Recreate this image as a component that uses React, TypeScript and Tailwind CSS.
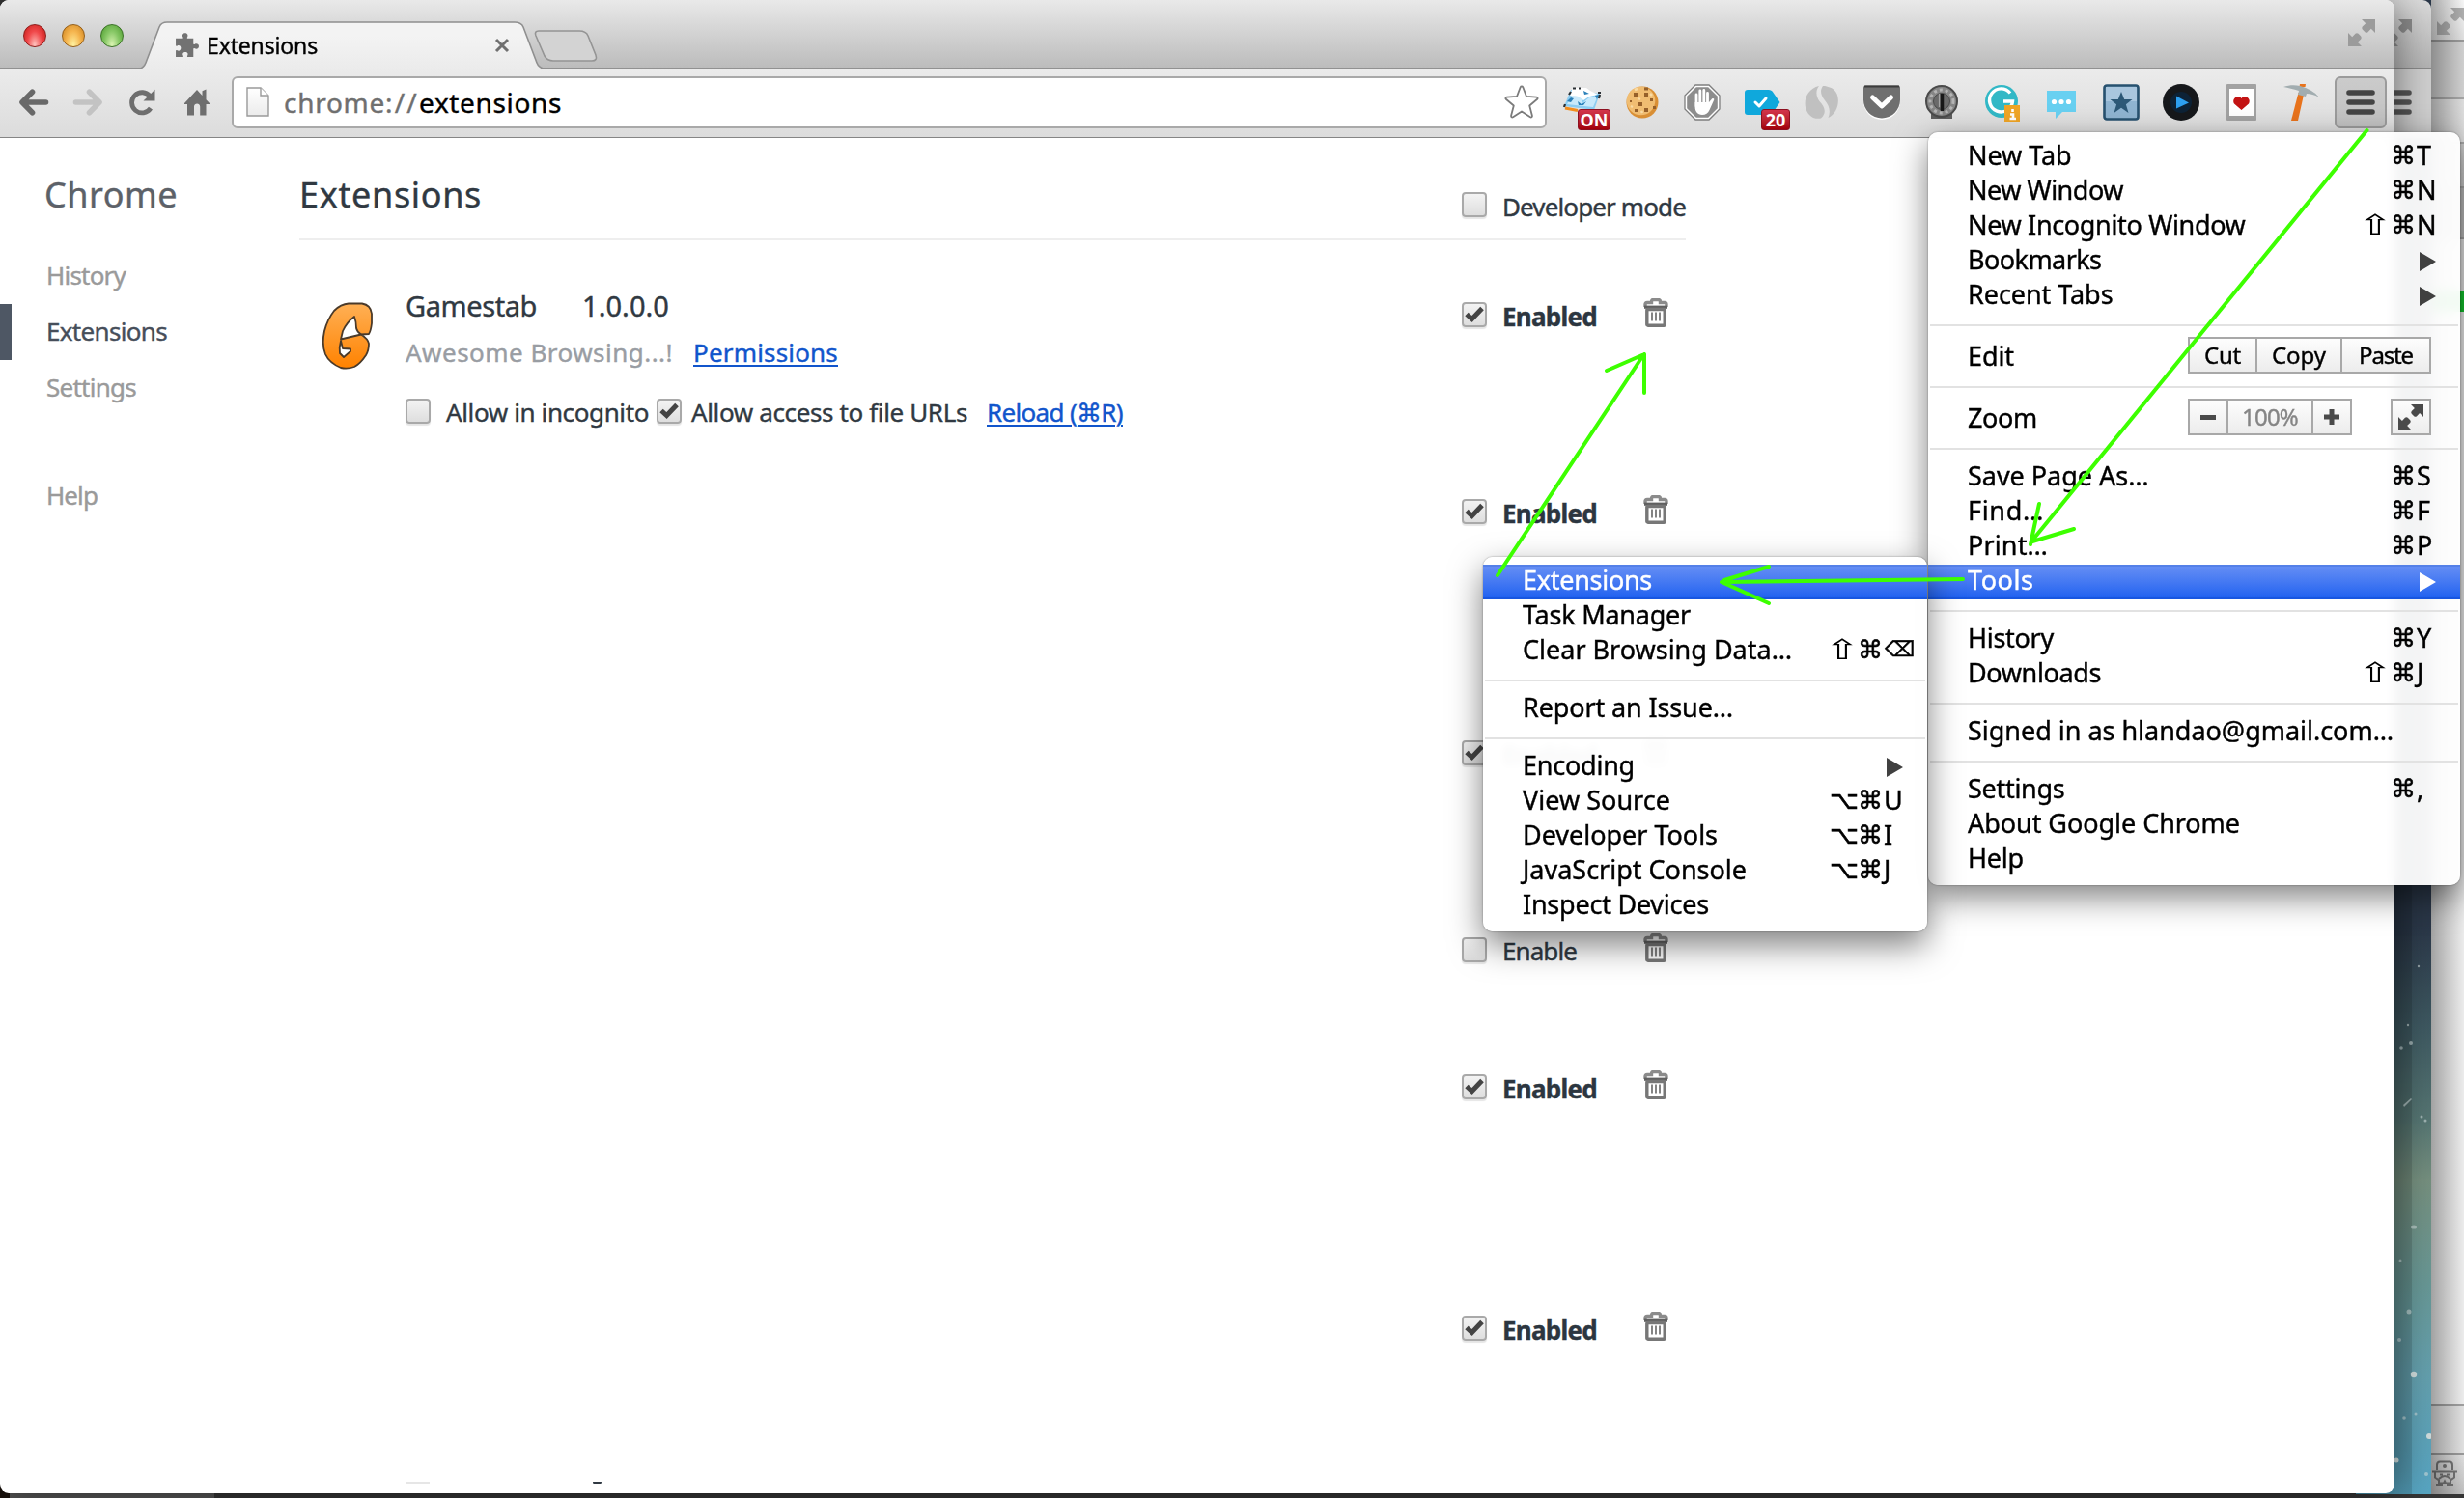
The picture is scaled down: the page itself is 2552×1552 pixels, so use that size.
import React, { useLayoutEffect, useRef } from "react";

/** Text run whose tracking is adjusted so that its advance equals `w` pixels. */
function Fit({ w, className = "", children }: { w: number; className?: string; children: string }) {
  const ref = useRef<HTMLSpanElement>(null);
  useLayoutEffect(() => {
    const el = ref.current;
    if (!el) return;
    el.style.letterSpacing = "0px";
    const natural = el.getBoundingClientRect().width;
    el.style.letterSpacing = `${(w - natural) / children.length}px`;
  }, [w, children]);
  return (
    <span ref={ref} className={`inline-block whitespace-pre shrink-0 [-webkit-text-stroke:0.4px_currentColor] ${className}`}>
      {children}
    </span>
  );
}

/* ---------- toolbar icons ---------- */

const Puzzle = () => (
  <svg className="w-[25px] h-[25px]" viewBox="0 0 24 24" fill="#727272">
    <path d="M1 5.5h6.6c.9 0 .9-.8.4-1.500C7 2 8.300.2 10.300.2s3.300 1.800 2.300 3.800c-.5.700-.5 1.500.4 1.500h5.500v5.300c0 .9.900.9 1.500.4 2-1 4 .2 4 2.200s-2 3.300-4 2.300c-.6-.5-1.500-.5-1.500.4V24h-5.300c-.900 0-1-.8-.5-1.500 1-2-.3-3.300-2.200-3.300s-3.200 1.300-2.200 3.300c.500.700.4 1.500-.5 1.500H1v-6c0-.9.800-.9 1.500-.4 2 1 3.600-.4 3.600-2.400s-1.600-3.300-3.600-2.300c-.700.5-1.500.4-1.500-.4z" />
  </svg>
);

const Arrow = ({ flip, color }: { flip?: boolean; color: string }) => (
  <svg className={flip ? "w-[32px] h-[28px] -scale-x-100" : "w-[32px] h-[28px]"} viewBox="0 0 32 28" fill="none" stroke={color} strokeWidth="5.600" strokeLinecap="round" strokeLinejoin="round">
    <path d="M14.500 3.200 4 14l10.500 10.800M5 14h23.500" />
  </svg>
);

const Reload = () => (
  <svg className="w-[28px] h-[28px]" viewBox="0 0 28 28">
    <path d="M22.500 7.800A10.600 10.600 0 1 0 23 20.200" fill="none" stroke="#6e6e6e" strokeWidth="4.800" />
    <path d="M27.500.8V12.500H15.500z" fill="#6e6e6e" />
  </svg>
);

const Home = () => (
  <svg className="w-[26px] h-[28px]" viewBox="0 0 26 28" fill="#6e6e6e">
    <path d="M13 1 18.500 7V2.200L22.500 0.500V11.300L26 15v1h-3.500V27.500H16.200V18.500c0-4-6.200-4-6.200 0v9H3V16H0v-1z" />
  </svg>
);

const PageIcon = () => (
  <svg className="w-[24px] h-[32px]" viewBox="0 0 24 32">
    <defs>
      <linearGradient id="pg" x1="0" y1="0" x2="0" y2="1">
        <stop offset="0" stopColor="#fff" />
        <stop offset="1" stopColor="#ebebeb" />
      </linearGradient>
    </defs>
    <path d="M1 1h14l8 8v21H1z" fill="url(#pg)" stroke="#9a9a9a" strokeWidth="1.400" />
    <path d="M15 1v8h8" fill="#fff" stroke="#9a9a9a" strokeWidth="1.400" />
  </svg>
);

const StarOutline = () => (
  <svg className="w-[36px] h-[36px]" viewBox="0 0 36 36" fill="none" stroke="#7b7b7b" strokeWidth="1.800" strokeLinejoin="round">
    <path d="M16.700 2.300c.5-1.200 2.100-1.200 2.600 0l3.600 9.500 10.500.8c1.200.1 1.600 1.400.8 2.200l-8 6.700 2.700 10.300c.3 1.400-.9 2.200-2 1.500L18 27.500l-8.900 5.800c-1.100.7-2.300-.1-2-1.500l2.700-10.300-8-6.700c-.8-.8-.4-2.100.8-2.200l10.500-.8z" />
  </svg>
);

const Fullscreen = ({ className, color }: { className: string; color: string }) => (
  <svg className={className} viewBox="0 0 28 28" fill={color}>
    <path d="M14 0H28V14L23.800 9.800 20.500 13.200q-1.500 1.200-3 0l-2.700-2.700q-1.200-1.500 0-3L18.200 4.200z" />
    <path d="M0 14V28H14L9.800 23.800 13.200 20.500q1.200-1.500 0-3L10.500 14.800q-1.500-1.200-3 0L4.200 18.200z" />
  </svg>
);

const Bars = ({ className = "", color = "#444" }: { className?: string; color?: string }) => (
  <svg className={`w-[30px] h-[26px] shrink-0 ${className}`} viewBox="0 0 30 26" stroke={color} strokeWidth="5.600" strokeLinecap="round">
    <path d="M3 3h24M3 13h24M3 23h24" />
  </svg>
);

const Notes = () => (
  <svg className="w-[40px] h-[26px]" viewBox="0 0 40 26">
    <path d="M8 3 38 7 32 24 1 20z" fill="#8ccdf2" />
    <path d="M4 18 9 9 19 11 20 17 27 11 36 9 31 21z" fill="#c8e9fb" />
    <path d="M10 1h14l4 3 8 4-9 2-6 4-5-4-9-1z" fill="#fff" />
    <path d="M15 15l4 3 5-3-3 4-5 0zM4 15l4-4 3 1-3 4zM21 4l6 3-5 1zM33 9l4-1-2 5z" fill="#2a80b9" />
    <path d="M2 22l13 2.500" stroke="#f28c1c" strokeWidth="3" />
    <path d="M1 21l1-3M10 1.500h3M16 1.500h2M6 8l2-3M36 6h3M37 12l1-4" stroke="#2a2f33" strokeWidth="2.200" />
  </svg>
);

const Cookie = () => (
  <svg className="w-[36px] h-[36px]" viewBox="0 0 36 36">
    <circle cx="18" cy="18" r="16.500" fill="#d98f35" />
    <circle cx="16.500" cy="16.500" r="14.800" fill="#f0bd72" />
    <g fill="#96602a">
      <path d="M20 2.500h4v3h-4zM9 8h4v4H9zM20 8h4v4h-4zM14 18h4v4h-4zM26 14h3v3h-3zM10 25h3v3h-3zM20 24h4v4h-4zM29 22h3v3h-3zM5 16h2v2H5z" />
    </g>
    <path d="M10 5l3-1M14 14l2 1M6 22l2 1M26 9l2 2M17 27l1 2" stroke="#f9dba5" strokeWidth="2.500" />
  </svg>
);

const StopHand = () => (
  <svg className="w-[38px] h-[38px]" viewBox="0 0 38 38">
    <path d="M12 1h14l11 11v14L26 37H12L1 26V12z" fill="#fff" stroke="#7e7e7e" strokeWidth="1.300" />
    <path d="M12.800 3.200h12.400l9.600 9.600v12.400l-9.600 9.600H12.800l-9.600-9.600V12.800z" fill="#8d8d8d" />
    <path d="M13 11v12M16.800 7v14M20.800 6.500v14M24.500 9.500v13" stroke="#fff" strokeWidth="2.800" strokeLinecap="round" />
    <path d="M11.600 19h14.400l3-3.500c1.500-1 3 0 2 1.500L26.500 27c-1.500 3.500-4 5-7.500 5-5 0-7.400-4-7.400-8z" fill="#fff" />
  </svg>
);

const Tag = () => (
  <svg className="w-[37px] h-[26px]" viewBox="0 0 37 26">
    <path d="M3 0h22q2 0 3.500 1.500L36.500 13 28.500 24.500Q27 26 25 26H3q-3 0-3-3V3q0-3 3-3z" fill="#0fa8dc" />
    <path d="M11 13l4 4 7-8" fill="none" stroke="#fff" strokeWidth="3" strokeLinecap="round" strokeLinejoin="round" />
  </svg>
);

const Swirl = () => (
  <svg className="w-[36px] h-[36px]" viewBox="0 0 36 36" fill="#c0c0c0">
    <path d="M15 1C-2 5-4 27 9 34c3 1 6 1 8 .500C24 28 20 22 15.500 17 12 12 11 6 15 1z" />
    <path d="M19 1C15.500 6 17 11 21 16c5 6 6 12 3.500 18C37 29 39 6 26 2.500c-2-.8-4-1.500-7-1.500z" />
  </svg>
);

const Pocket = () => (
  <svg className="w-[40px] h-[36px]" viewBox="0 0 40 36">
    <path d="M1 3h38v14a19 19 0 0 1-38 0z" fill="#fff" />
    <path d="M1 3q0-2.500 2.500-2.500h33Q39 .5 39 3v12.500a19 19 0 0 1-38 0z" fill="#6f6f6f" />
    <path d="M2 1.500h36" stroke="#3c3c3c" strokeWidth="2" />
    <path d="M10.500 13 20 22 29.500 13" fill="none" stroke="#fff" strokeWidth="5" strokeLinecap="round" strokeLinejoin="round" />
  </svg>
);

const Dial = () => (
  <svg className="w-[36px] h-[38px]" viewBox="0 0 36 38">
    <path d="M7 28h22v8H7z" fill="#5e5e5e" />
    <circle cx="18" cy="18" r="16" fill="#868686" stroke="#4a4a4a" strokeWidth="2" />
    <circle cx="18" cy="18" r="12" fill="none" stroke="#b4b4b4" strokeWidth="3" strokeDasharray="3 3" />
    <circle cx="18" cy="18" r="8.500" fill="#6a6a6a" stroke="#4a4a4a" />
    <path d="M18.500 10v18" stroke="#181818" strokeWidth="3.500" />
    <path d="M15.500 10v14" stroke="#a5a5a5" strokeWidth="1.200" />
  </svg>
);

const GMark = () => (
  <svg className="w-[37px] h-[39px]" viewBox="0 0 37 39">
    <circle cx="17" cy="18" r="17" fill="#32b8c6" />
    <path d="M26 9.500A12 12 0 1 0 28.500 18H19" fill="none" stroke="#fff" strokeWidth="3.400" />
    <path d="M20 22h16v17H20z" fill="#f0a526" />
    <path d="M28.500 26v3M26 31.500h3V36M25.500 36h6.500" fill="none" stroke="#fff" strokeWidth="2.600" />
  </svg>
);

const Chat = () => (
  <svg className="w-[30px] h-[29px]" viewBox="0 0 30 29">
    <path d="M0 0h30v22H16l-7 7v-7H0z" fill="#68d0f1" />
    <g fill="#fff">
      <circle cx="7.500" cy="11.500" r="2.600" />
      <circle cx="15" cy="11.500" r="2.600" />
      <circle cx="22.500" cy="11.500" r="2.600" />
    </g>
  </svg>
);

const StarBox = () => (
  <svg className="w-[38px] h-[38px]" viewBox="0 0 38 38">
    <rect x="1.500" y="1.500" width="35" height="35" rx="2.500" fill="#8fb4d1" stroke="#27516f" strokeWidth="2.600" />
    <path d="M3 3h32v15H3z" fill="#a9c6de" />
    <path d="M19 8l3.200 8h8.300l-6.600 5.200 2.600 8.800-7.500-5.200-7.500 5.200 2.600-8.800L7.500 16h8.300z" fill="#2c5877" />
  </svg>
);

const PlayDisc = () => (
  <svg className="w-[38px] h-[38px]" viewBox="0 0 38 38">
    <circle cx="19" cy="19" r="19" fill="#16181b" />
    <circle cx="19" cy="19" r="11" fill="#0d2236" />
    <path d="M14 12.500 27 19.500 14 25.500z" fill="#2d9ff0" />
  </svg>
);

const HeartCard = () => (
  <svg className="w-[31px] h-[38px]" viewBox="0 0 31 38">
    <rect width="31" height="38" rx="1" fill="#a2a2a2" />
    <rect x="3" y="5" width="25" height="28" fill="#fff" />
    <path d="M15.500 27 8 20.500c-3-4.500 3.500-10.500 7.500-5.500 4-5 10.500 1 7.500 5.500z" fill="#c31414" />
  </svg>
);

const Pick = () => (
  <svg className="w-[37px] h-[38px]" viewBox="0 0 37 38">
    <path d="M15.500 9h6L15 38H8z" fill="#e8731c" />
    <path d="M17 0h6l-.5 3h-6z" fill="#e8731c" />
    <path d="M0 3C8 0 17 1 23 4c7 3 11 6 14 10-5-3-9-4-13-4l-1 3-8-2 1-4C10 5 5 4 0 3z" fill="#a2adb0" />
  </svg>
);

const Badge = ({ children, className }: { children: string; className: string }) => (
  <div className={`absolute h-[22px] rounded-[3px] border border-[#8d1020] bg-gradient-to-b from-[#d3354b] to-[#a30009] text-center font-bold text-white text-[18px] leading-[20px] ${className}`}>
    {children}
  </div>
);

const Slot = ({ children }: { children: React.ReactNode }) => (
  <div className="relative w-[62px] h-[54px] shrink-0 flex items-center justify-center">{children}</div>
);

/* ---------- page pieces ---------- */

const Check = ({ on }: { on?: boolean }) => (
  <span className="w-[26px] h-[26px] shrink-0 rounded-[4px] border-2 border-[#a9a9a9] bg-gradient-to-b from-[#f3f3f3] to-[#dedede] shadow-[0_2px_1px_rgba(0,0,0,0.1)] flex items-center justify-center">
    {on && (
      <svg className="w-[20px] h-[20px]" viewBox="0 0 20 20" fill="none" stroke="#444" strokeWidth="5">
        <path d="M2 9.500 7.500 14.500 18 3.500" />
      </svg>
    )}
  </span>
);

const Trash = () => (
  <svg className="w-[26px] h-[30px] shrink-0" viewBox="0 0 26 30">
    <path d="M2 9V6.500Q2 4.500 4 4.500H8.500V3.500Q8.500 1.500 10.500 1.500H15.500Q17.500 1.500 17.500 3.500V4.500H22Q24 4.500 24 6.500V9" fill="none" stroke="#8b8b8b" strokeWidth="3.400" />
    <path d="M1 9.200h24" stroke="#606060" strokeWidth="3.200" />
    <rect x="3.800" y="11.500" width="18.400" height="16.700" rx="1" fill="#fff" stroke="#777" strokeWidth="3.400" />
    <path d="M9 14.500v9M13 14.500v9M17 14.500v9" stroke="#777" strokeWidth="1.800" />
  </svg>
);

function Controls({ on = true }: { on?: boolean }) {
  return (
    <div className="flex w-[232px] h-[30px] shrink-0">
      <div className="pt-[2px] flex">
        <Check on={on} />
      </div>
      <Fit w={on ? 98 : 77} className={on ? "ml-[16px] -mt-[2px] text-[26px] leading-[38px] font-bold text-[#2c3640]" : "ml-[16px] -mt-[2px] text-[26px] leading-[37px] text-[#303942]"}>
        {on ? "Enabled" : "Enable"}
      </Fit>
      <div className={on ? "ml-[48px] -mt-[2px]" : "ml-[69px] -mt-[2px]"}>
        <Trash />
      </div>
    </div>
  );
}

const GamestabLogo = () => (
  <svg className="w-[54px] h-[70px]" viewBox="0 0 54 70" stroke="#4a3a2a" strokeWidth="1.800" strokeLinejoin="round">
    <defs>
      <linearGradient id="gl" x1="0" y1="0" x2="0" y2="1">
        <stop offset="0" stopColor="#ffb055" />
        <stop offset="1" stopColor="#ff8200" />
      </linearGradient>
    </defs>
    <path
      d="M28 1.500H42Q51 3 52 12L52 22Q51 30 49 33L41 33.500Q48 38 49 43 49 50 46 55 40 64 34 67 27 69.500 20 68 8 63 4 54 0 44 3 30 6 18 13 9 20 2 28 1.500z"
      fill="url(#gl)"
    />
    <path d="M34 15Q26 21 22 30L20 38.500 41 33.500Q37 31 36 27 36 20 34 15z" fill="#fff" />
    <path d="M20 40Q18 47 19 53L23 57 30 51V48.500L22 48z" fill="#fff" />
  </svg>
);

/* ---------- menus ---------- */

const Mod = ({ children }: { children: string }) => (
  <span
    className={
      children === "⇧"
        ? "w-[28px] shrink-0 text-center text-[29px] font-['DejaVu_Sans'] scale-x-[1.500] -translate-x-[1px]"
        : "w-[28px] shrink-0 text-center text-[26px] font-['DejaVu_Sans'] [-webkit-text-stroke:0.600px_#000]"
    }
  >
    {children}
  </span>
);

type Item = { label: string; w: number; mods?: string[]; k?: string; sub?: boolean; hot?: boolean };

function Row({ label, w, mods, k, sub, hot }: Item) {
  return (
    <div
      className={
        hot
          ? "h-[36px] pl-[41px] flex items-start text-white bg-gradient-to-b from-[#648df4] to-[#2062f0] border-y-2 border-t-[#5480e8] border-b-[#1856e0]"
          : "h-[36px] pl-[41px] flex items-start text-black pt-[1px]"
      }
    >
      <Fit w={w + 3} className={hot ? "text-[27px] leading-[28px]" : "text-[27px] leading-[30px]"}>
        {label}
      </Fit>
      <div className="flex-1" />
      {mods && (
        <div className="flex h-[35px] leading-[30px] text-[27px]">
          {mods.map((m) => (
            <Mod key={m}>{m}</Mod>
          ))}
          <span className={k === "⌫" ? "w-[45px] pl-[1px] text-[22px] font-['DejaVu_Sans'] [-webkit-text-stroke:0.500px_#000]" : "w-[45px] [-webkit-text-stroke:0.400px_#000]"}>{k}</span>
        </div>
      )}
      {sub && (
        <svg className={hot ? "w-[17px] h-[20px] mr-[25px] mt-[6px]" : "w-[17px] h-[20px] mr-[25px] mt-[7px]"} viewBox="0 0 17 20" fill={hot ? "#fff" : "#404040"}>
          <path d="M0 0 17 10 0 20z" />
        </svg>
      )}
    </div>
  );
}

const Sep = () => <div className="h-[24px] py-[11px] px-[2px]"><div className="h-[2px] bg-[#e2e2e2]" /></div>;

const cell = "h-[34px] flex items-center justify-center bg-gradient-to-b from-[#fdfdfd] to-[#ececec]";

function MainMenu() {
  return (
    <div className="absolute left-[1997px] top-[137px] w-[551px] h-[780px] py-[8px] rounded-[10px] bg-white/95 backdrop-blur-[6px] shadow-[0_12px_34px_rgba(0,0,0,0.5),0_0_2px_rgba(0,0,0,0.45)]">
      <Row label="New Tab" w={104.500} mods={["⌘"]} k="T" />
      <Row label="New Window" w={158} mods={["⌘"]} k="N" />
      <Row label="New Incognito Window" w={284.500} mods={["⇧", "⌘"]} k="N" />
      <Row label="Bookmarks" w={135.500} sub />
      <Row label="Recent Tabs" w={147.500} sub />
      <Sep />
      <div className="h-[40px] pl-[41px] flex items-start text-[27px]">
        <Fit w={48} className="leading-[39px]">Edit</Fit>
        <div className="ml-auto mr-[30px] h-[38px] flex gap-[2px] p-[2px] bg-[#a8a8a8] text-[24px]">
          <div className={`${cell} w-[68px]`}><Fit w={38} className="leading-[34px]">Cut</Fit></div>
          <div className={`${cell} w-[86px]`}><Fit w={56} className="leading-[34px]">Copy</Fit></div>
          <div className={`${cell} w-[90px]`}><Fit w={56} className="leading-[34px]">Paste</Fit></div>
        </div>
      </div>
      <Sep />
      <div className="h-[40px] pl-[41px] flex items-start text-[27px]">
        <Fit w={72} className="leading-[40px]">Zoom</Fit>
        <div className="ml-auto h-[38px] flex gap-[2px] p-[2px] bg-[#a8a8a8] text-[24px]">
          <div className={`${cell} w-[38px]`}><div className="w-[16px] h-[5px] bg-[#4a4a4a]" /></div>
          <div className={`${cell} w-[86px] text-[#858585]`}><Fit w={58} className="leading-[34px]">100%</Fit></div>
          <div className={`${cell} w-[38px]`}>
            <svg className="w-[16px] h-[16px]" viewBox="0 0 16 16" fill="#4a4a4a"><path d="M5.500 0h5v5.500H16v5h-5.500V16h-5v-5.500H0v-5h5.500z" /></svg>
          </div>
        </div>
        <div className="ml-[40px] mr-[30px] h-[38px] w-[42px] p-[2px] bg-[#a8a8a8]">
          <div className={`${cell} w-[38px]`}><Fullscreen className="w-[28px] h-[26px]" color="#4a4a4a" /></div>
        </div>
      </div>
      <Sep />
      <Row label="Save Page As…" w={184.500} mods={["⌘"]} k="S" />
      <Row label="Find…" w={76} mods={["⌘"]} k="F" />
      <Row label="Print…" w={80} mods={["⌘"]} k="P" />
      <Row label="Tools" w={65.500} sub hot />
      <Sep />
      <Row label="History" w={86} mods={["⌘"]} k="Y" />
      <Row label="Downloads" w={135} mods={["⇧", "⌘"]} k="J" />
      <Sep />
      <Row label="Signed in as hlandao@gmail.com…" w={438} />
      <Sep />
      <Row label="Settings" w={97.500} mods={["⌘"]} k="," />
      <Row label="About Google Chrome" w={279} />
      <Row label="Help" w={55} />
    </div>
  );
}

function ToolsMenu() {
  return (
    <div className="absolute left-[1536px] top-[577px] w-[460px] h-[388px] py-[8px] rounded-[10px] bg-white/97 backdrop-blur-[4px] shadow-[0_14px_34px_rgba(0,0,0,0.5),0_0_2px_rgba(0,0,0,0.45)]">
      <Row label="Extensions" w={131} hot />
      <Row label="Task Manager" w={171} />
      <Row label="Clear Browsing Data…" w={276} mods={["⇧", "⌘"]} k="⌫" />
      <Sep />
      <Row label="Report an Issue…" w={215} />
      <Sep />
      <Row label="Encoding" w={113} sub />
      <Row label="View Source" w={150} mods={["⌥", "⌘"]} k="U" />
      <Row label="Developer Tools" w={199} mods={["⌥", "⌘"]} k="I" />
      <Row label="JavaScript Console" w={229} mods={["⌥", "⌘"]} k="J" />
      <Row label="Inspect Devices" w={190} />
    </div>
  );
}

/* ---------- main window ---------- */

function TabStrip() {
  return (
    <div className="relative h-[72px] shrink-0 flex bg-gradient-to-b from-[#e9e9e9] to-[#bcbcbc] border-b-2 border-[#919191]">
      <div className="flex gap-[16px] pt-[25px] pl-[24px] w-[145px] shrink-0">
        <span className="w-[24px] h-[24px] rounded-full border border-[#8f1f1c] bg-[radial-gradient(ellipse_at_50%_95%,#ffc4bf_0%,#f0484a_50%,#d9302f_75%,#a3201e_100%)]" />
        <span className="w-[24px] h-[24px] rounded-full border border-[#96601a] bg-[radial-gradient(ellipse_at_50%_95%,#fff2a0_0%,#f5b44e_50%,#e09a35_75%,#a86a1c_100%)]" />
        <span className="w-[24px] h-[24px] rounded-full border border-[#3c7428] bg-[radial-gradient(ellipse_at_50%_95%,#dcf5b4_0%,#86c765_50%,#68b048_75%,#3f7c29_100%)]" />
      </div>
      <div className="relative w-[418px] h-[72px] shrink-0 z-10">
        <svg className="absolute left-0 top-0 w-[418px] h-[72px]" viewBox="0 0 418 72">
          <defs>
            <linearGradient id="tab" x1="0" y1="0" x2="0" y2="1">
              <stop offset="0.300" stopColor="#f3f3f3" />
              <stop offset="1" stopColor="#ebebeb" />
            </linearGradient>
          </defs>
          <path d="M0 72V71Q4 70 6 65L20 28Q22 23 28 23H388Q395 23 397 28L411 65Q413 70 418 71V72z" fill="url(#tab)" />
          <path d="M0 71Q4 70 6 65L20 28Q22 23 28 23H388Q395 23 397 28L411 65Q413 70 418 71" fill="none" stroke="#8f8f8f" strokeWidth="1.600" />
        </svg>
        <div className="relative flex pt-[34px] pl-[36px]">
          <Puzzle />
          <Fit w={115} className="ml-[8px] -mt-[4px] text-[23px] leading-[34px] text-black">Extensions</Fit>
          <svg className="w-[16px] h-[16px] mt-[5px] ml-[183px]" viewBox="0 0 16 16" stroke="#707070" strokeWidth="3"><path d="M2 2l12 12M14 2 2 14" /></svg>
        </div>
      </div>
      <svg className="w-[68px] h-[36px] mt-[29px] -ml-[11px]" viewBox="0 0 68 36">
        <path d="M6 3H48Q55 3 57 8L65 28Q67 34 61 34H21Q15 34 12 29L3 8Q1 3 6 3z" fill="#d3d3d3" stroke="#949494" strokeWidth="1.600" />
      </svg>
      <Fullscreen className="ml-auto mr-[20px] mt-[20px] w-[28px] h-[28px]" color="#9b9b9b" />
    </div>
  );
}

function Toolbar() {
  return (
    <div className="h-[71px] shrink-0 flex pt-[7px] bg-gradient-to-b from-[#ebebeb] to-[#dcdcdc] border-b border-[#858585]">
      <div className="w-[240px] h-[54px] pl-[19px] flex items-center shrink-0">
        <Arrow color="#696969" />
        <div className="ml-[24px] flex"><Arrow flip color="#c3c3c3" /></div>
        <div className="ml-[26px] flex"><Reload /></div>
        <div className="ml-[30px] flex"><Home /></div>
      </div>
      <div className="w-[1362px] h-[54px] shrink-0 flex items-center rounded-[6px] border-2 border-[#a9a9a9] bg-white pl-[13px] pr-[6px]">
        <PageIcon />
        <div className="ml-[15px] w-[140px] shrink-0 flex text-[28px] leading-[50px] text-[#6f6f6f]">
          <Fit w={105}>chrome</Fit>
          <Fit w={35}>{"://"}</Fit>
        </div>
        <Fit w={148} className="text-[28px] leading-[50px] text-black">extensions</Fit>
        <div className="ml-auto flex"><StarOutline /></div>
      </div>
      <div className="ml-[6px] flex">
        <Slot>
          <div className="-mt-[6px]"><Notes /></div>
          <Badge className="left-[26px] top-[34px] w-[34px]">ON</Badge>
        </Slot>
        <Slot><Cookie /></Slot>
        <Slot><StopHand /></Slot>
        <Slot>
          <Tag />
          <Badge className="left-[30px] top-[34px] w-[30px]">20</Badge>
        </Slot>
        <Slot><Swirl /></Slot>
        <Slot><Pocket /></Slot>
        <Slot><Dial /></Slot>
        <Slot><div className="pl-[2px]"><GMark /></div></Slot>
        <Slot><div className="pt-[4px]"><Chat /></div></Slot>
        <Slot><StarBox /></Slot>
        <Slot><PlayDisc /></Slot>
        <Slot><HeartCard /></Slot>
        <Slot><Pick /></Slot>
      </div>
      <div className="ml-[4px] w-[54px] h-[54px] shrink-0 rounded-[6px] border-2 border-[#9b9b9b] bg-gradient-to-b from-[#cbcbcb] to-[#c1c1c1] flex items-center justify-center">
        <Bars />
      </div>
    </div>
  );
}

function Sidebar() {
  return (
    <div className="w-[310px] shrink-0 pt-[33px] text-[26px] leading-[57px] text-[#9a9a9a]">
      <div className="pl-[46px] h-[50px] text-[36px] leading-[51px] text-[#5c6168]"><Fit w={138}>Chrome</Fit></div>
      <div className="mt-[31px] h-[58px] pl-[48px]"><Fit w={82}>History</Fit></div>
      <div className="h-[58px] pl-[36px] border-l-[12px] border-[#4e5764] text-[#464e5a]"><Fit w={125}>Extensions</Fit></div>
      <div className="h-[58px] pl-[48px]"><Fit w={93}>Settings</Fit></div>
      <div className="mt-[54px] h-[58px] pl-[48px]"><Fit w={53}>Help</Fit></div>
    </div>
  );
}

function ExtensionsPage() {
  return (
    <div className="w-[1436px] shrink-0 flex flex-col text-[#303942] text-[26px]">
      <div className="h-[106px] flex border-b-2 border-[#eeeeee] pt-[33px]">
        <Fit w={189} className="text-[36px] leading-[52px]">Extensions</Fit>
        <div className="ml-auto flex pt-[23px]">
          <Check />
          <Fit w={190} className="ml-[16px] -mt-[2px] leading-[34px]">Developer mode</Fit>
        </div>
      </div>
      <div className="h-[204px] flex">
        <div className="w-[110px] pt-[64px] pl-[23px] shrink-0"><GamestabLogo /></div>
        <div className="flex-1 pt-[47px]">
          <div className="h-[40px] flex text-[29px] leading-[41px]">
            <Fit w={136}>Gamestab</Fit>
            <Fit w={90} className="ml-[47px]">1.0.0.0</Fit>
          </div>
          <div className="mt-[9px] h-[40px] flex leading-[40px]">
            <Fit w={277} className="text-[#999da3]">Awesome Browsing...!</Fit>
            <Fit w={150} className="ml-[21px] text-[#1155cc] underline decoration-2 underline-offset-[3px]">Permissions</Fit>
          </div>
          <div className="mt-[22px] h-[40px] flex items-center leading-[40px]">
            <div className="flex -mt-[2px]"><Check /></div>
            <Fit w={210} className="ml-[16px]">Allow in incognito</Fit>
            <div className="ml-[8px] -mt-[2px] flex"><Check on /></div>
            <Fit w={286} className="ml-[10px]">Allow access to file URLs</Fit>
            <Fit w={141} className="ml-[20px] text-[#1155cc] underline decoration-2 underline-offset-[3px]">Reload (⌘R)</Fit>
          </div>
        </div>
        <div className="pt-[62px]"><Controls /></div>
      </div>
      <div className="h-[250px] flex justify-end pt-[62px]"><Controls /></div>
      <div className="h-[204px] flex justify-end pt-[62px]"><Controls /></div>
      <div className="h-[142px] flex justify-end pt-[62px]"><Controls on={false} /></div>
      <div className="h-[250px] flex justify-end pt-[62px]"><Controls /></div>
      <div className="h-[236px] flex justify-end pt-[62px]"><Controls /></div>
      <div className="flex pl-[111px] items-start">
        <div className="w-[24px] h-[2px] bg-[#e6e6e6]" />
        <div className="ml-[169px] w-[9px] h-[3px] rounded-b-full bg-[#303942]" />
      </div>
    </div>
  );
}

function BrowserWindow() {
  return (
    <div className="absolute left-0 top-0 w-[2480px] h-[1547px] flex flex-col rounded-[9px] overflow-hidden bg-white shadow-[0_0_44px_rgba(0,0,0,0.5)]">
      <TabStrip />
      <Toolbar />
      <div className="flex-1 flex">
        <Sidebar />
        <ExtensionsPage />
      </div>
    </div>
  );
}

/* ---------- desktop behind ---------- */

function Desktop() {
  return (
    <>
      <div className="absolute left-0 top-[1540px] w-[2552px] h-[12px] flex">
        <div className="w-[10px] bg-[#1a120c]" />
        <div className="w-[212px] bg-[#555555]" />
        <div className="flex-1 bg-[#353535]" />
      </div>
      <div className="absolute left-0 top-0 w-[2518px] h-[1548px] flex justify-end">
        <div className="w-[78px] bg-[linear-gradient(to_bottom,#2b3849_0%,#2b3849_62%,#3f5a62_69%,#567673_75%,#76907f_79%,#689896_86%,#64a0ae_92%,#57a5c2_100%)]">
          <div className="w-[58px] h-full bg-black/12" />
        </div>
      </div>
      <svg className="absolute left-[2480px] top-[930px] w-[38px] h-[616px]" viewBox="0 0 38 616" fill="#cfdcdc">
        <g opacity="0.6">
          <circle cx="17" cy="151" r="2" />
          <circle cx="7" cy="156" r="1.800" />
          <circle cx="28" cy="227" r="1.500" />
          <circle cx="32" cy="231" r="1.500" />
          <circle cx="25" cy="71" r="1.200" />
          <circle cx="14" cy="132" r="1.200" />
          <path d="M9 215l8-7 1 1-8 8z" />
          <ellipse cx="20" cy="341" rx="3" ry="1.500" />
          <circle cx="6" cy="376" r="1.500" />
          <circle cx="15" cy="429" r="2.500" />
          <circle cx="5" cy="458" r="2" />
          <circle cx="10" cy="539" r="1.800" />
          <circle cx="22" cy="535" r="1.500" />
          <circle cx="33" cy="597" r="2" />
        </g>
        <circle cx="20" cy="494" r="3.200" />
        <circle cx="36" cy="558" r="3" />
        <circle cx="2" cy="583" r="2.500" />
      </svg>
      <div className="absolute left-[2518px] top-0 w-[34px] h-[1548px] flex flex-col bg-[#ececec]">
        <div className="h-[43px] border-b-2 border-[#999] bg-gradient-to-b from-[#f6f6f6] to-[#dedede] pl-[6px] pt-[8px] flex">
          <Fullscreen className="w-[28px] h-[28px] shrink-0" color="#adadad" />
        </div>
        <div className="h-[60px] border-b-2 border-[#a5a5a5] bg-[#cfcfcf]" />
        <div className="h-[46px] border-b-2 border-[#a5a5a5] bg-[#dcdcdc]" />
        <div className="h-[46px] border-b-2 border-[#a5a5a5] bg-[#c9c9c9]" />
        <div className="h-[53px] border-b-2 border-[#a0a0a0] bg-[#b9b9b9]" />
        <div className="h-[53px] bg-[#e2e2e2]" />
        <div className="h-[22px] bg-[#12c22c]" />
        <div className="h-[1134px] border-b-2 border-[#a0a0a0] bg-[#ececec]" />
        <div className="h-[50px] border-b-2 border-[#9a9a9a] bg-[#e0e0e0]" />
        <div className="flex-1 bg-gradient-to-b from-[#dedede] to-[#bfbfbf] pt-[6px] pl-[1px]">
          <svg className="w-[26px] h-[28px]" viewBox="0 0 26 28" fill="none" stroke="#757575" strokeWidth="2">
            <path d="M5 10V5Q5 1.500 8 1.500H18Q21 1.500 21 5V10M0 11.500H26M3 11.500v6l4 3v3h5l1-2 1 2h5v-3l4-3v-6M7 19q6-6 12 0M8 14.500h3M15 14.500h3M4 26h7M15 26h7" />
            <circle cx="13" cy="6" r="1" fill="#757575" />
          </svg>
        </div>
      </div>
      <div className="absolute left-[2518px] top-0 w-[34px] h-[1548px] bg-gradient-to-r from-black/30 to-transparent" />
      <div className="absolute left-[2400px] top-0 w-[118px] h-[143px] rounded-tr-[9px] overflow-hidden">
        <div className="h-[72px] bg-gradient-to-b from-[#dcdcdc] to-[#b4b4b4] border-b-2 border-[#8a8a8a] pt-[20px] pl-[70px]">
          <Fullscreen className="w-[28px] h-[28px]" color="#8c8c8c" />
        </div>
        <div className="h-[71px] bg-[#d0d0d0] pt-[21px] pl-[68px]"><Bars color="#555" /></div>
      </div>
    </>
  );
}

const Annotations = () => (
  <svg className="absolute left-0 top-0 w-[2552px] h-[1552px] pointer-events-none" viewBox="0 0 2552 1552" fill="none" stroke="#3dff00" strokeWidth="4" strokeLinecap="round">
    <path d="M2451.500 135 2104 561M2112 522 2103 564M2105 561 2148 548" />
    <path d="M2033 600 1784 603M1786 601 1832 587M1783 603 1832 625" />
    <path d="M1551 596 1702 368M1703 367 1664 384M1703 367V407" />
  </svg>
);

export default function App() {
  return (
    <div className="relative w-[2552px] h-[1552px] overflow-hidden bg-[#353535] font-['Noto_Sans','DejaVu_Sans',sans-serif]">
      <Desktop />
      <BrowserWindow />
      <MainMenu />
      <ToolsMenu />
      <Annotations />
    </div>
  );
}
